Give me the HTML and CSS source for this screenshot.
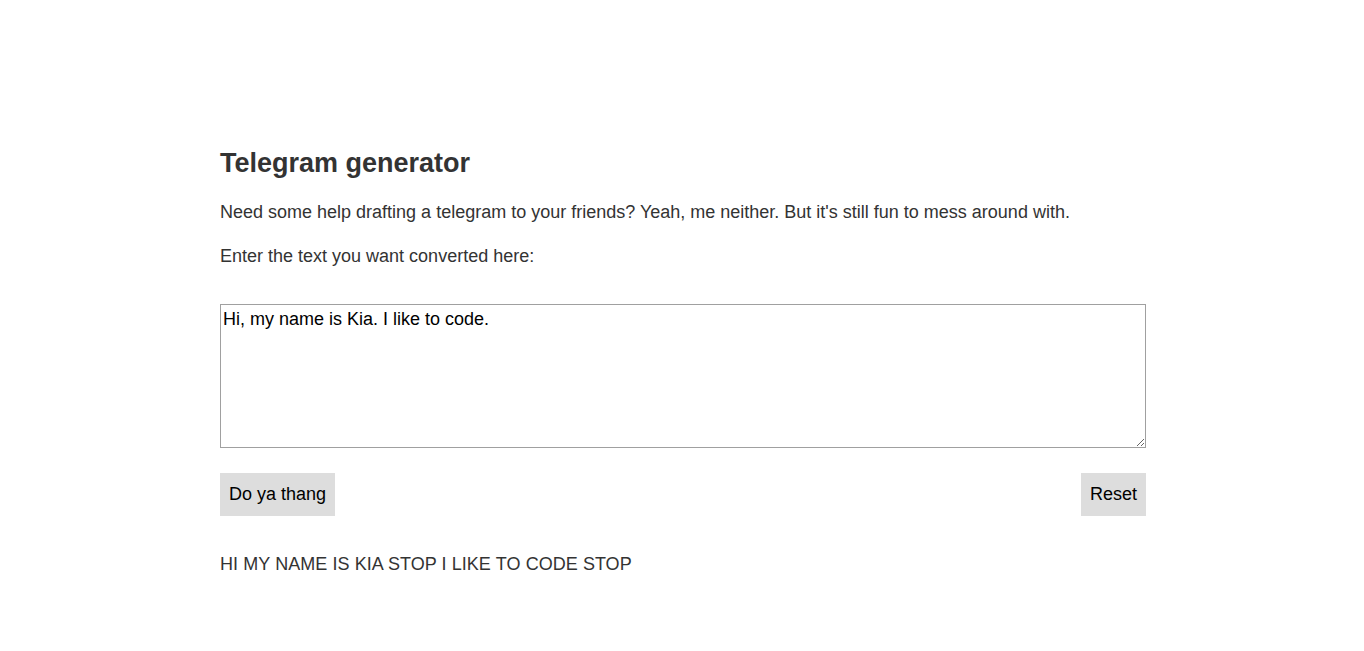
FILE: index.html
```html
<!DOCTYPE html>
<html lang="en">
<head>
<meta charset="utf-8">
<title>Telegram generator</title>
<link rel="stylesheet" href="styles.css">
</head>
<body>
<main class="page">
  <h1 class="title">Telegram generator</h1>
  <p class="text intro">Need some help drafting a telegram to your friends? Yeah, me neither. But it's still fun to mess around with.</p>
  <p class="text">Enter the text you want converted here:</p>
  <textarea class="input">Hi, my name is Kia. I like to code.</textarea>
  <div class="actions">
    <button class="btn">Do ya thang</button>
    <button class="btn">Reset</button>
  </div>
  <p class="output">HI MY NAME IS KIA STOP I LIKE TO CODE STOP</p>
</main>
</body>
</html>
```

FILE: styles.css
```css
html, body {
  margin: 0;
  padding: 0;
  background: #fff;
}
body {
  padding-left: 2px;
  font-family: "Liberation Sans", Arial, sans-serif;
  color: #333;
}
.page {
  width: 926px;
  margin: 0 auto;
  padding-top: 145px;
}
.title {
  font-size: 27px;
  font-weight: bold;
  margin: 0 0 19px;
  line-height: 36px;
}
.text {
  font-size: 18px;
  line-height: 24px;
  margin: 0 0 19px;
}
.intro {
  margin-bottom: 20px;
}
.input {
  display: block;
  box-sizing: border-box;
  width: 926px;
  height: 144px;
  margin-top: 36px;
  padding: 4px 2px 2px;
  border: 1px solid #a0a0a0;
  font-family: "Liberation Sans", Arial, sans-serif;
  font-size: 18px;
  color: #000;
  resize: both;
}
.actions {
  display: flex;
  justify-content: space-between;
  margin-top: 25px;
}
.btn {
  background: #ddd;
  border: none;
  font-family: "Liberation Sans", Arial, sans-serif;
  font-size: 18px;
  color: #000;
  height: 43px;
  padding: 0 9px;
}
.output {
  font-size: 18px;
  line-height: 24px;
  word-spacing: 0.25px;
  margin: 36px 0 0;
}
```
